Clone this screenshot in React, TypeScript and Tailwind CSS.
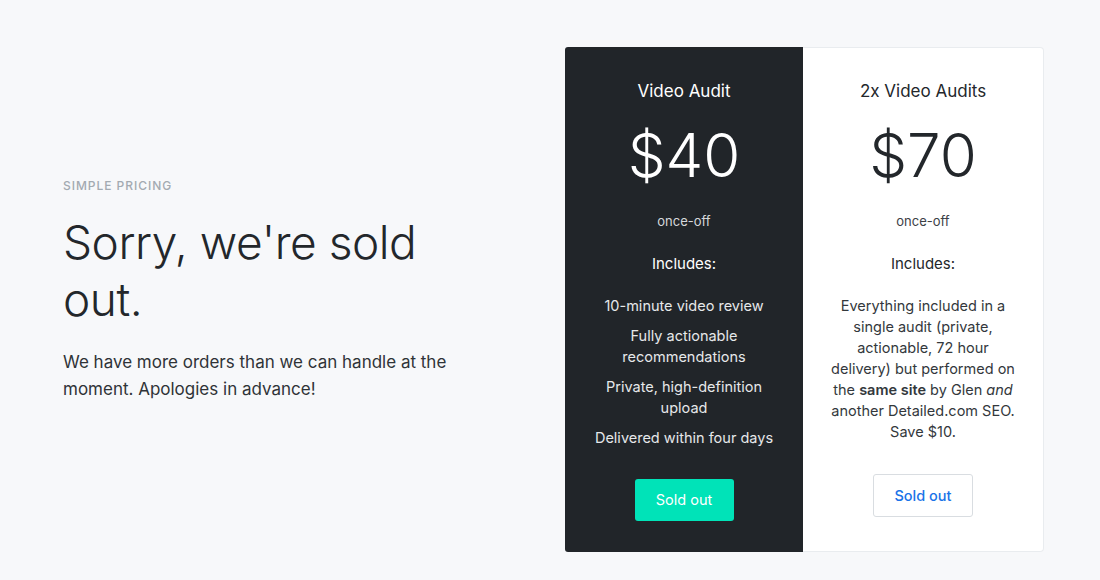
import React from "react";

const features = [
  "10-minute video review",
  "Fully actionable recommendations",
  "Private, high-definition upload",
  "Delivered within four days",
];

function App() {
  return (
    <div
      className="min-h-screen w-full bg-[#f7f8fa] flex"
      style={{ fontFamily: "Inter, 'Open Sans', sans-serif" }}
    >
      <div className="w-[565px] pl-[63px] pt-[177px] pr-[100px]">
        <p className="text-[12px] tracking-[0.08em] font-medium text-[#a3aab1] uppercase">Simple pricing</p>
        <h1 className="mt-[19px] text-[46px] leading-[57px] font-light text-[#23272b] tracking-[-0.01em]">
          Sorry, we're sold out.
        </h1>
        <p className="mt-[21px] text-[17px] leading-[27px] text-[#2f3337]">
          We have more orders than we can handle at the moment. Apologies in advance!
        </p>
      </div>

      <div className="mt-[47px] flex h-[505px]">
        <div className="w-[238px] bg-[#212529] rounded-l-[3px] flex flex-col items-center pt-[32px] text-white">
          <h2 className="text-[17px] leading-[24px]">Video Audit</h2>
          <div className="mt-[19px] text-[60px] leading-[66px] font-light">$40</div>
          <p className="mt-[24px] text-[13px] text-[#d5d8db]">once-off</p>
          <p className="mt-[21px] text-[15px]">Includes:</p>
          <ul className="mt-[20px] px-[18px] flex flex-col gap-[9px] text-[14.5px] leading-[21px] text-center text-[#e6e8ea]">
            {features.map((f) => (
              <li key={f}>{f}</li>
            ))}
          </ul>
          <button className="mt-[31px] w-[99px] h-[42px] rounded-[3px] bg-[#00e3b8] text-white text-[14.5px]">
            Sold out
          </button>
        </div>

        <div className="w-[241px] bg-white border border-l-0 border-[#e9ecef] rounded-r-[4px] flex flex-col items-center pt-[31px] text-[#23272b]">
          <h2 className="text-[17px] leading-[24px]">2x Video Audits</h2>
          <div className="mt-[19px] text-[60px] leading-[66px] font-light">$70</div>
          <p className="mt-[24px] text-[13px] text-[#3c4146]">once-off</p>
          <p className="mt-[21px] text-[15px]">Includes:</p>
          <p className="mt-[20px] px-[12px] text-[14.5px] leading-[21px] text-center text-[#33383c]">
            Everything included in a<br />
            single audit (private,<br />
            actionable, 72 hour<br />
            delivery) but performed on<br />
            the <strong className="font-semibold">same site</strong> by Glen <em>and</em>
            <br />
            another Detailed.com SEO.
            <br />
            Save $10.
          </p>
          <button className="mt-[32px] w-[100px] h-[43px] rounded-[3px] bg-white border border-[#d9dde1] text-[#1a73e8] text-[14.5px] font-medium">
            Sold out
          </button>
        </div>
      </div>
    </div>
  );
}

export default App;
